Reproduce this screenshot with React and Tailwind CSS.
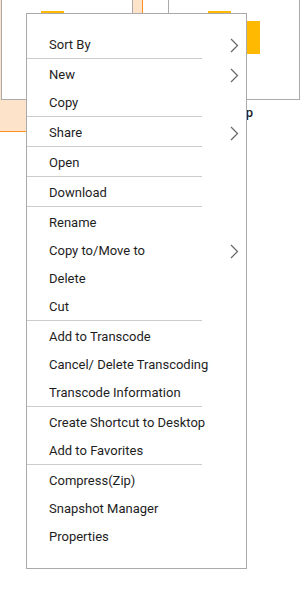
import React from "react";

function Folder() {
  return (
    <svg width="52" height="43" viewBox="0 0 52 43">
      <rect x="0" y="0" width="23" height="11" fill="#ffb900" />
      <rect x="0" y="10" width="52" height="33" fill="#ffb900" />
    </svg>
  );
}

function Chevron() {
  return (
    <svg width="9" height="15" viewBox="0 0 9 15" className="shrink-0">
      <path d="M1 1 L7.5 7.5 L1 14" fill="none" stroke="#666" strokeWidth="1.2" />
    </svg>
  );
}

const groups = [
  [{ t: "Sort By", sub: true }],
  [{ t: "New", sub: true }, { t: "Copy" }],
  [{ t: "Share", sub: true }],
  [{ t: "Open" }],
  [{ t: "Download" }],
  [{ t: "Rename" }, { t: "Copy to/Move to", sub: true }, { t: "Delete" }, { t: "Cut" }],
  [{ t: "Add to Transcode" }, { t: "Cancel/ Delete Transcoding" }, { t: "Transcode Information" }],
  [{ t: "Create Shortcut to Desktop" }, { t: "Add to Favorites" }],
  [{ t: "Compress(Zip)" }, { t: "Snapshot Manager" }, { t: "Properties" }],
];

export default function App() {
  return (
    <div
      className="relative w-[305px] h-[593px] overflow-hidden bg-white"
      style={{ fontFamily: "Roboto, 'Liberation Sans', sans-serif" }}
    >
      {/* background file tiles */}
      <div className="flex items-start mt-[-20px] ml-[-9px]">
        <div className="w-[152px] h-[152px] bg-[#fde3c9] border-r border-b border-[#f7931e] pl-[10px] pt-[10px]">
          <div className="w-[132px] h-[110px] bg-white border border-[#aaaaaa] pl-[39px] pt-[20px]">
            <Folder />
          </div>
        </div>
        <div className="ml-[15px] pl-[10px] pt-[10px]">
          <div className="w-[132px] h-[110px] bg-white border border-[#aaaaaa] pl-[39px] pt-[20px]">
            <Folder />
          </div>
          <div className="w-[132px] pt-[4px] pr-[47px] text-right text-[13px] leading-[18px] text-[#222] font-medium">
            Desktop
          </div>
        </div>
      </div>

      {/* context menu */}
      <div className="absolute left-[26px] top-[13px] w-[221px] bg-white border border-[#aaaaaa] pt-[16px] pb-[18px]">
        {groups.map((g, gi) => (
          <div key={gi}>
            {gi > 0 && <div className="w-[175px] h-[2px] border-t border-[#cccccc]" />}
            {g.map((it) => (
              <div
                key={it.t}
                className="h-[28px] flex items-center justify-between pt-[2px] pl-[22px] pr-[7px] text-[13px] text-[#1e1e1e]"
              >
                <span>{it.t}</span>
                {it.sub && <Chevron />}
              </div>
            ))}
          </div>
        ))}
      </div>
    </div>
  );
}
